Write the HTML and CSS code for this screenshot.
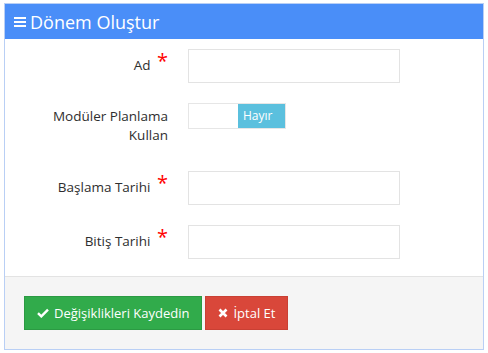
FILE: index.html
```html
<!DOCTYPE html>
<html lang="tr">
<head>
    <meta charset="UTF-8">
    <title>Dönem Oluştur</title>
    <link rel="stylesheet" href="styles.css">
</head>
<body>
    <div class="panel">
        <div class="panel-heading">
            <svg class="menu-icon" width="12" height="12" viewBox="0 0 12 12"><rect x="0" y="1" width="12" height="2" fill="#fff"/><rect x="0" y="5" width="12" height="2" fill="#fff"/><rect x="0" y="9" width="12" height="2" fill="#fff"/></svg>
            <span>Dönem Oluştur</span>
        </div>
        <form class="panel-body">
            <div class="form-group">
                <label class="control-label">Ad <span class="required">*</span></label>
                <input type="text" class="form-control">
            </div>
            <div class="form-group form-group-switch">
                <label class="control-label">Modüler Planlama Kullan</label>
                <div class="switch">
                    <span class="switch-handle"></span>
                    <span class="switch-off">Hayır</span>
                </div>
            </div>
            <div class="form-group">
                <label class="control-label">Başlama Tarihi <span class="required">*</span></label>
                <input type="text" class="form-control">
            </div>
            <div class="form-group">
                <label class="control-label">Bitiş Tarihi <span class="required">*</span></label>
                <input type="text" class="form-control">
            </div>
        </form>
        <div class="panel-footer">
            <button type="button" class="btn btn-success">
                <svg width="12" height="10" viewBox="0 0 12 10"><path d="M1 5.2 L4.3 8.4 L11 1.6" stroke="#fff" stroke-width="2.4" fill="none"/></svg>
                Değişiklikleri Kaydedin
            </button>
            <button type="button" class="btn btn-danger">
                <svg width="10" height="10" viewBox="0 0 10 10"><path d="M1.5 1.5 L8.5 8.5 M8.5 1.5 L1.5 8.5" stroke="#fff" stroke-width="2.6" fill="none"/></svg>
                İptal Et
            </button>
        </div>
    </div>
</body>
</html>
```

FILE: styles.css
```css
body {
    margin: 0;
    padding: 3px 4px;
    font-family: "Open Sans", Arial, sans-serif;
    font-size: 13px;
    color: #333;
    background: #fff;
}

.panel {
    width: 478px;
    border: 1px solid #b9cff5;
}

.panel-heading {
    display: flex;
    align-items: center;
    gap: 4px;
    height: 35px;
    padding-left: 9px;
    background-color: #4a8ef8;
    color: #fff;
    font-size: 18px;
}

.menu-icon {
    margin-top: 1px;
}

.panel-body {
    margin: 0;
    padding: 10px 0 0;
}

.form-group {
    display: grid;
    grid-template-columns: 163px 212px;
    column-gap: 20px;
    margin-bottom: 20px;
}

.form-group:last-child {
    margin-bottom: 17px;
}

.control-label {
    padding: 7px 0 0 40px;
    text-align: right;
    line-height: 19px;
    font-size: 13.5px;
    color: #2e2e2e;
}

.required {
    color: #f00;
    font-size: 20px;
    line-height: 10px;
    margin-left: 3px;
    position: relative;
    top: -2px;
}

.form-control {
    box-sizing: border-box;
    height: 34px;
    width: 212px;
    margin: 0;
    border: 1px solid #e3e3e3;
    background: #fff;
}

.form-group-switch {
    margin-bottom: 26px;
}

.form-group-switch .control-label {
    padding-top: 4px;
}

.switch {
    display: flex;
    width: 98px;
    height: 26px;
    box-sizing: border-box;
    border: 1px solid #e6e6e6;
}

.switch-handle {
    width: 49px;
    background: #fff;
}

.switch-off {
    flex: 1;
    background-color: #5bc0de;
    color: #fff;
    font-size: 12px;
    line-height: 24px;
    padding-left: 5px;
}

.panel-footer {
    display: flex;
    gap: 3px;
    padding: 19px;
    background-color: #f5f5f5;
    border-top: 1px solid #e3e3e3;
}

.btn {
    display: flex;
    align-items: center;
    gap: 5px;
    height: 34px;
    padding: 0 12px;
    border: 1px solid transparent;
    color: #fff;
    font-family: "Open Sans", Arial, sans-serif;
    font-size: 13px;
    cursor: pointer;
}

.btn-success {
    background-color: #31ab4b;
    border-color: #2b9a43;
}

.btn-danger {
    background-color: #d9473a;
    border-color: #c94034;
}
```
